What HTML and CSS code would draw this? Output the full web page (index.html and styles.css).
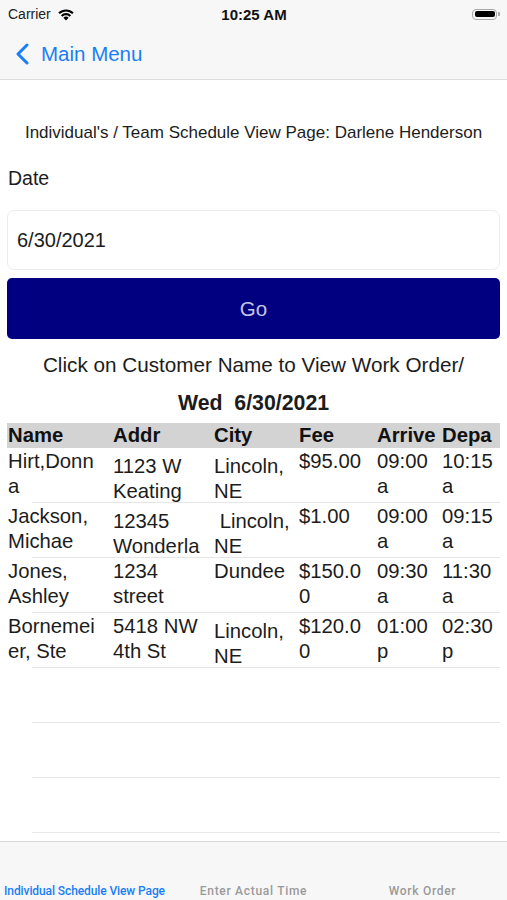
FILE: index.html
```html
<!DOCTYPE html>
<html lang="en">
<head>
    <meta charset="UTF-8">
    <meta name="viewport" content="width=device-width, initial-scale=1.0">
    <title>Individual Schedule View</title>
    <link rel="stylesheet" href="styles.css">
</head>
<body>
    <div class="app">
        <!-- Status bar -->
        <div class="status-bar">
            <div class="carrier">
                Carrier
                <svg class="wifi" width="18" height="13" viewBox="0 0 18 13">
                    <path d="M9 12.5 L6.4 9.7 A3.8 3.8 0 0 1 11.6 9.7 Z" fill="#000"/>
                    <path d="M3.9 7.2 A7.3 7.3 0 0 1 14.1 7.2 L12.6 8.7 A5.2 5.2 0 0 0 5.4 8.7 Z" fill="#000"/>
                    <path d="M1.3 4.6 A11 11 0 0 1 16.7 4.6 L15.2 6.1 A8.9 8.9 0 0 0 2.8 6.1 Z" fill="#000"/>
                </svg>
            </div>
            <div class="clock">10:25 AM</div>
            <div class="battery">
                <span class="battery-body"><span class="battery-level"></span></span>
                <span class="battery-cap"></span>
            </div>
        </div>

        <!-- Navigation bar -->
        <div class="nav-bar">
            <a class="back-link" href="#">
                <svg width="16" height="22" viewBox="0 0 16 22">
                    <path d="M12 2 L3 11 L12 20" fill="none" stroke="#1a7ef5" stroke-width="3" stroke-linecap="round" stroke-linejoin="round"/>
                </svg>
                Main Menu
            </a>
        </div>

        <div class="content">
            <p class="page-title">Individual's / Team Schedule View Page: Darlene Henderson</p>

            <label class="field-label">Date</label>
            <div class="date-input">6/30/2021</div>
            <button class="go-button">Go</button>

            <p class="hint">Click on Customer Name to View Work Order/</p>
            <p class="day-title">Wed&nbsp; 6/30/2021</p>

            <div class="schedule">
                <div class="schedule-head">
                    <div>Name</div>
                    <div>Addr</div>
                    <div>City</div>
                    <div>Fee</div>
                    <div>Arrive</div>
                    <div>Depa</div>
                </div>

                <div class="schedule-row">
                    <div>Hirt,Donn<br>a</div>
                    <div class="low">1123 W<br>Keating</div>
                    <div class="low">Lincoln,<br>NE</div>
                    <div>$95.00</div>
                    <div>09:00<br>a</div>
                    <div>10:15<br>a</div>
                </div>
                <div class="schedule-row">
                    <div>Jackson,<br>Michae</div>
                    <div class="low">12345<br>Wonderla</div>
                    <div class="low">&nbsp;Lincoln,<br>NE</div>
                    <div>$1.00</div>
                    <div>09:00<br>a</div>
                    <div>09:15<br>a</div>
                </div>
                <div class="schedule-row">
                    <div>Jones,<br>Ashley</div>
                    <div>1234<br>street</div>
                    <div>Dundee</div>
                    <div>$150.0<br>0</div>
                    <div>09:30<br>a</div>
                    <div>11:30<br>a</div>
                </div>
                <div class="schedule-row">
                    <div>Bornemei<br>er, Ste</div>
                    <div>5418 NW<br>4th St</div>
                    <div class="low">Lincoln,<br>NE</div>
                    <div>$120.0<br>0</div>
                    <div>01:00<br>p</div>
                    <div>02:30<br>p</div>
                </div>
                <div class="schedule-row empty"></div>
                <div class="schedule-row empty"></div>
                <div class="schedule-row empty"></div>
            </div>
        </div>

        <!-- Tab bar -->
        <div class="tab-bar">
            <a class="tab active" href="#">Individual Schedule View Page</a>
            <a class="tab" href="#">Enter Actual Time</a>
            <a class="tab" href="#">Work Order</a>
        </div>
    </div>
</body>
</html>
```

FILE: styles.css
```css
/* General */
body {
    margin: 0;
    font-family: 'Liberation Sans', Arial, sans-serif;
    color: #1c1c1c;
    background: #fff;
}

.app {
    width: 507px;
    height: 900px;
    display: flex;
    flex-direction: column;
    overflow: hidden;
}

/* Status bar */
.status-bar {
    height: 28px;
    background: #f7f7f7;
    display: flex;
    align-items: center;
    justify-content: space-between;
    padding: 0 7px 0 8px;
    font-size: 14px;
}

.carrier {
    width: 100px;
    display: flex;
    align-items: center;
    gap: 6px;
    color: #222;
}

.clock {
    font-weight: bold;
    font-size: 15px;
    color: #111;
}

.battery {
    width: 100px;
    display: flex;
    justify-content: flex-end;
    align-items: center;
}

.battery-body {
    width: 25px;
    height: 11px;
    border: 1.5px solid #aaa;
    border-radius: 4px;
    padding: 1.5px;
    box-sizing: border-box;
    display: flex;
}

.battery-level {
    flex: 1;
    background: #000;
    border-radius: 2px;
}

.battery-cap {
    width: 2px;
    height: 4px;
    background: #aaa;
    border-radius: 0 1px 1px 0;
    margin-left: 1px;
}

/* Navigation bar */
.nav-bar {
    height: 51px;
    background: #f7f7f7;
    border-bottom: 1px solid #dcdcdc;
    display: flex;
    align-items: center;
    padding-left: 15px;
}

.back-link {
    display: flex;
    align-items: center;
    gap: 10px;
    color: #1a7ef5;
    text-decoration: none;
    font-size: 20.5px;
}

/* Content */
.content {
    flex: 1;
    padding: 0 7px;
}

.page-title {
    margin: 43px 0 0;
    text-align: center;
    font-size: 17px;
    line-height: 20px;
    color: #1c1c1c;
}

.field-label {
    display: block;
    margin: 23px 0 0 1px;
    font-size: 19.5px;
    line-height: 24px;
}

.date-input {
    margin-top: 20px;
    height: 60px;
    border: 1px solid #ececec;
    border-radius: 7px;
    box-sizing: border-box;
    display: flex;
    align-items: center;
    padding-left: 9px;
    font-size: 20px;
}

.go-button {
    display: block;
    width: 100%;
    margin-top: 8px;
    height: 61px;
    border: none;
    border-radius: 5px;
    background: #000080;
    color: #c6c6e6;
    font-family: inherit;
    font-size: 20.5px;
}

.hint {
    margin: 14px 0 0;
    text-align: center;
    font-size: 20.7px;
    line-height: 24px;
}

.day-title {
    margin: 14px 0 0;
    text-align: center;
    font-size: 21.3px;
    line-height: 24px;
    font-weight: bold;
}

/* Schedule table */
.schedule {
    margin-top: 8px;
    font-size: 20.3px;
}

.schedule-head,
.schedule-row {
    display: grid;
    grid-template-columns: 105px 101px 85px 78px 65px 1fr;
}

.schedule-head {
    height: 25px;
    line-height: 25px;
    background: #d3d3d3;
    font-weight: bold;
    padding-left: 1px;
    color: #111;
}

.schedule-row {
    height: 55px;
    line-height: 25px;
    padding-top: 1px;
    padding-left: 1px;
    box-sizing: border-box;
    position: relative;
    color: #1c1c1c;
    white-space: nowrap;
}

.schedule-row div {
    overflow: hidden;
}

.schedule-row::after {
    content: "";
    position: absolute;
    left: 25px;
    right: 0;
    bottom: 0;
    height: 1px;
    background: #e6e6e6;
}

.schedule-row .low {
    padding-top: 5px;
}

/* Tab bar */
.tab-bar {
    height: 59px;
    background: #f7f7f7;
    border-top: 1px solid #d8d8d8;
    display: grid;
    grid-template-columns: repeat(3, 1fr);
    align-items: end;
    padding-bottom: 2px;
    box-sizing: border-box;
}

.tab {
    text-align: center;
    font-family: Roboto, sans-serif;
    font-weight: 500;
    font-size: 12px;
    letter-spacing: 0.7px;
    color: #9a9a9a;
    text-decoration: none;
    white-space: nowrap;
}

.tab.active {
    color: #1a7ef5;
    letter-spacing: -0.1px;
}
```
